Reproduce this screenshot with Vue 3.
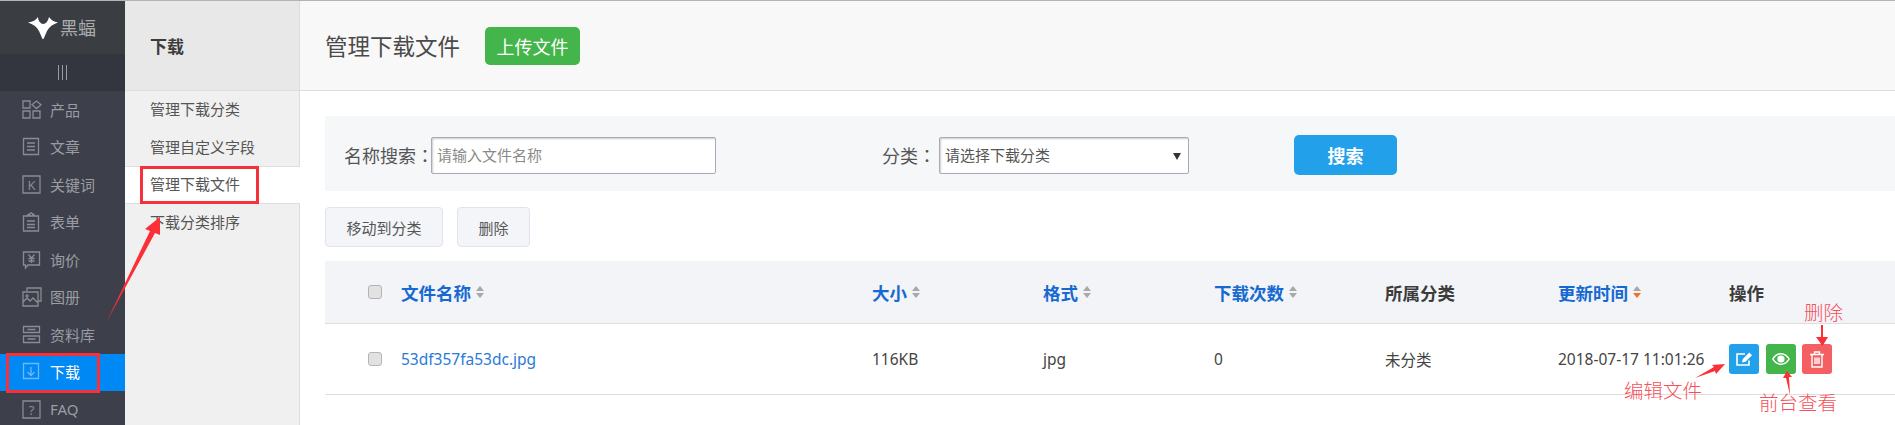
<script setup>
const menu = [
  { name: '产品', paths: ['M1 1h7v7H1zM1 11h7v7H1zM11 11h7v7h-7zM14.500 1l4.500 3.800-4.500 3.800-4.500-3.800z'] },
  { name: '文章', paths: ['M1.500 1.500h15v16h-15zM5 6h8M5 9.500h8M5 13h8'] },
  { name: '关键词', paths: ['M1 1h17v17H1z'], label: 'K' },
  { name: '表单', paths: ['M1.500 4h15v15h-15zM6 4V2.500h1.500a1.500 1.500 0 0 1 3 0H12V4M5 9h8M5 12.500h8M5 15.500h8'] },
  { name: '询价', paths: ['M1.500 2h16v13H6l-2.500 3v-3h-2zM6.500 4.500l3 3.500 3-3.500M9.500 8v5M6.500 8.500h6M6.500 11h6'] },
  { name: '图册', paths: ['M5 4V1h14v13h-3M1 5h15v14H1zM1 15l4-4 3 3 3-3 5 5M5 8a1 1 0 1 0 .1 0'] },
  { name: '资料库', paths: ['M1.500 1.500h16v6h-16zM1.500 11h16v6.500h-16zM5.500 4.500h8M5.500 14h8'] },
  { name: '下载', active: true, paths: ['M1.500 1.500h15v15h-15zM9 5v8M5.500 10L9 13.500 12.500 10'] },
  { name: 'FAQ', paths: ['M1 1h17v17H1z'], label: '?' }
]
const subs = [
  { name: '管理下载分类' },
  { name: '管理自定义字段' },
  { name: '管理下载文件', active: true },
  { name: '下载分类排序' }
]
const columns = [
  { name: '文件名称', sort: 'none', link: true },
  { name: '大小', sort: 'none', link: true },
  { name: '格式', sort: 'none', link: true },
  { name: '下载次数', sort: 'none', link: true },
  { name: '所属分类', sort: '', link: false },
  { name: '更新时间', sort: 'desc', link: true },
  { name: '操作', sort: '', link: false }
]
</script>

<template>
  <div class="page">
    <aside class="side">
      <div class="logo">
        <svg class="bat" width="30" height="22" viewBox="0 0 30 22">
          <path fill="#fff" d="M0 5.500C5 5 8 3 10 0c0 4 3 7 5 7 3 0 5-3 6-7 2 3 5 5 9 5.500-5 1.500-9 4.500-11 8.500l-3.500 8h-1L11 14C9 10 5 7 0 5.500z" />
        </svg>
        <span class="logo-text">黑蝠</span>
      </div>
      <div class="toggle"><i></i><i></i><i></i></div>
      <ul class="menu">
        <li v-for="m in menu" :key="m.name" :class="{ on: m.active }">
          <svg class="mi" width="20" height="20" viewBox="0 0 20 20" fill="none" stroke="currentColor" stroke-width="1.300">
            <path v-for="p in m.paths" :key="p" :d="p" />
            <text v-if="m.label" x="9.500" y="14.500" text-anchor="middle" class="mi-label">{{ m.label }}</text>
          </svg>
          <span class="mt">{{ m.name }}</span>
        </li>
      </ul>
    </aside>

    <nav class="sub">
      <div class="sub-head">下载</div>
      <ul class="sub-list">
        <li v-for="s in subs" :key="s.name" :class="{ on: s.active }">{{ s.name }}</li>
      </ul>
    </nav>

    <main class="main">
      <header class="head">
        <h1>管理下载文件</h1>
        <button class="upload">上传文件</button>
      </header>
      <section class="body">
        <div class="search">
          <label class="l1">名称搜索<span class="colon">：</span></label>
          <input class="name-input" placeholder="请输入文件名称" />
          <label class="l2">分类<span class="colon">：</span></label>
          <div class="cat-wrap">
            <select class="cat"><option>请选择下载分类</option></select>
          </div>
          <button class="go">搜索</button>
        </div>
        <div class="tools">
          <button>移动到分类</button>
          <button>删除</button>
        </div>
        <div class="table">
          <div class="tr th">
            <span class="ck-cell"><i class="ck"></i></span>
            <span v-for="c in columns" :key="c.name" class="hc" :class="{ link: c.link }">
              {{ c.name }}
              <span v-if="c.sort" class="sort" :class="c.sort"><b></b><b></b></span>
            </span>
          </div>
          <div class="tr td">
            <span class="ck-cell"><i class="ck"></i></span>
            <span class="file">53df357fa53dc.jpg</span>
            <span>116KB</span>
            <span>jpg</span>
            <span>0</span>
            <span>未分类</span>
            <span>2018-07-17 11:01:26</span>
            <span class="ops">
              <a class="op blue">
                <svg width="18" height="18" viewBox="0 0 18 18" fill="none" stroke="#fff" stroke-width="1.600">
                  <path d="M14 10.500V15H2V4h8" />
                  <path fill="#fff" stroke="none" d="M7 12.500l.8-3.500 6.500-6.500 2.700 2.700-6.500 6.500z" />
                </svg>
              </a>
              <a class="op green">
                <svg width="18" height="14" viewBox="0 0 18 14">
                  <path fill="#fff" fill-rule="evenodd" d="M0 7c2.200-3.800 5.300-6 9-6s6.800 2.200 9 6c-2.200 3.800-5.300 6-9 6S2.200 10.800 0 7zm1.700 0C3.600 9.900 6 11.600 9 11.600s5.400-1.700 7.300-4.600C14.400 4.100 12 2.400 9 2.400S3.600 4.100 1.700 7zM9 3.400a3.600 3.600 0 1 1 0 7.200 3.600 3.600 0 0 1 0-7.200z" />
                </svg>
              </a>
              <a class="op red">
                <svg width="14" height="17" viewBox="0 0 14 17" fill="none" stroke="#fff" stroke-width="1.400">
                  <path d="M0 3.500h14M4.500 3.500V1h5v2.500M2 3.500V16h10V3.500M5 6.500V13M7 6.500V13M9 6.500V13" />
                </svg>
              </a>
            </span>
          </div>
        </div>
      </section>
    </main>

    <div class="box box-a"></div>
    <div class="box box-b"></div>
    <svg class="arrows" width="1895" height="425" viewBox="0 0 1895 425">
      <path d="M106 323L150 231 145 229 160 217 160 235 155 233z" />
      <path d="M1695 378L1714 367 1712 365 1725 364 1716 374 1715 371z" />
      <path d="M1790 395L1786 378 1783 378 1787 371 1792 377 1789 377z" />
      <path d="M1821 325H1823V337H1828L1822.500 346 1816 337H1821z" />
    </svg>
    <span class="note n1">删除</span>
    <span class="note n2">编辑文件</span>
    <span class="note n3">前台查看</span>
  </div>
</template>

<style scoped>
.page {
  position: relative;
  display: flex;
  width: 1895px;
  height: 425px;
  overflow: hidden;
  box-sizing: border-box;
  border-top: 1px solid #b4b4b4;
  font-family: "Noto Sans", "Noto Sans CJK SC", sans-serif;
  color: #444;
  font-size: 15px;
  background: #fff;
}
ul { list-style: none; margin: 0; padding: 0; }
.side { width: 125px; flex: none; background: #3d3f4a; }
.logo {
  height: 53px;
  background: #3a3e43;
  display: flex;
  align-items: center;
  padding-left: 28px;
  gap: 2px;
  box-sizing: border-box;
}
.logo-text { color: #a9abac; font-size: 18px; line-height: 1; }
.toggle {
  height: 37px;
  background: #33363f;
  display: flex;
  justify-content: center;
  align-items: center;
  gap: 3px;
}
.toggle i { width: 1px; height: 15px; background: #9a9ca1; }
.menu li {
  height: 37.5px;
  display: flex;
  align-items: center;
  padding-left: 22px;
  gap: 8px;
  color: #9b9da3;
}
.mt { margin-top: -1px; }
.menu li.on { background: #0088f4; color: #fff; }
.menu li.on svg { color: #6db9f7; }
.mi { flex: none; color: #8a8c93; }
.mi-label { font-size: 13px; fill: currentColor; stroke: none; font-family: "Noto Sans", sans-serif; }

.sub {
  width: 175px;
  flex: none;
  box-sizing: border-box;
  background: #f0f0f0;
  border-right: 1px solid #ddd;
}
.sub-head {
  height: 90px;
  box-sizing: border-box;
  border-bottom: 1px solid #dedede;
  background: #e9e8e9;
  padding-left: 25px;
  display: flex;
  align-items: center;
  font-size: 17px;
  font-weight: 700;
  color: #3c3c3c;
}
.sub-list li {
  height: 37.5px;
  display: flex;
  align-items: center;
  padding-left: 25px;
  padding-bottom: 2px;
  box-sizing: border-box;
  color: #555;
}
.sub-list li.on {
  background: #fff;
  margin-right: -1px;
  border-top: 1px solid #ddd;
  border-bottom: 1px solid #ddd;
}

.main { flex: 1; min-width: 0; }
.head {
  height: 90px;
  box-sizing: border-box;
  background: #f8f8f8;
  border-bottom: 1px solid #dedede;
  padding-left: 25px;
  display: flex;
  align-items: center;
  gap: 25px;
}
h1 { margin: 0; font-size: 22.500px; font-weight: 400; color: #4a4a4a; }
button { font-family: inherit; cursor: pointer; }
.upload {
  width: 95px;
  height: 38px;
  border: 0;
  border-radius: 5px;
  background: #43b54a;
  color: #fff;
  font-size: 18px;
  padding: 0;
}
.body { padding: 25px 0 0 25px; }
.search {
  height: 75px;
  box-sizing: border-box;
  padding-top: 3px;
  background: #f6f7f9;
  display: flex;
  align-items: center;
  padding-left: 19px;
}
.l1, .l2 { font-size: 18px; color: #555; white-space: nowrap; }
.colon { font-family: "Noto Sans CJK TC", sans-serif; }
.l1 { width: 87px; }
.l2 { width: 57px; margin-left: 166px; }
.name-input, .cat {
  box-sizing: border-box;
  height: 37px;
  border: 1px solid #a9a9b8;
  border-radius: 2px;
  box-shadow: inset 1px 1px 2px #ccc;
  background: #fff;
  font-family: inherit;
  font-size: 15px;
  color: #555;
  outline: 0;
}
.name-input { width: 285px; padding: 0 5px; }
.name-input::placeholder { color: #8a8a8a; }
.cat-wrap { position: relative; display: flex; }
.cat-wrap::after {
  content: '';
  position: absolute;
  left: 234px;
  top: 16px;
  width: 0;
  height: 0;
  border-left: 4px solid transparent;
  border-right: 4px solid transparent;
  border-top: 7px solid #333;
}
.cat { width: 250px; padding: 0 0 0 5px; appearance: none; }
.go {
  margin-left: 105px;
  width: 103px;
  height: 40px;
  border: 0;
  border-radius: 5px;
  background: #22a0ea;
  color: #fff;
  font-size: 18px;
  font-weight: 700;
  padding: 0;
}
.tools { display: flex; gap: 14px; padding-top: 16px; }
.tools button {
  height: 40px;
  box-sizing: border-box;
  border: 1px solid #dfe5ef;
  border-radius: 4px;
  background: #f3f5f9;
  color: #555;
  font-size: 15px;
  padding: 0 20.500px;
}
.table { margin-top: 14px; }
.tr {
  display: grid;
  grid-template-columns: 76px 471px 171px 171px 171px 173px 171px 1fr;
  align-items: center;
  border-bottom: 1px solid #dedede;
  box-sizing: border-box;
  font-size: 15.500px;
}
.th { height: 63px; background: #f2f4f8; }
.td { height: 71px; }
.ck-cell { padding-left: 43px; display: flex; }
.ck {
  width: 14px;
  height: 14px;
  box-sizing: border-box;
  border: 1px solid #b5b5b5;
  border-radius: 3px;
  background: #e2e2e2;
}
.hc { font-size: 17.500px; font-weight: 700; color: #3c3c3c; display: flex; align-items: center; gap: 5px; }
.hc.link { color: #1769d2; }
.sort { display: inline-flex; flex-direction: column; gap: 2px; }
.sort b { width: 0; height: 0; border-left: 4.500px solid transparent; border-right: 4.500px solid transparent; }
.sort b:first-child { border-bottom: 5px solid #a8a8a8; }
.sort b:last-child { border-top: 5px solid #a8a8a8; }
.sort.desc b:last-child { border-top-color: #f2711c; }
.file { color: #2a7ad8; }
.ops { display: flex; gap: 7px; }
.op {
  width: 30px;
  height: 30px;
  border-radius: 3px;
  display: flex;
  align-items: center;
  justify-content: center;
}
.blue { background: #22a0ea; }
.green { background: #43b54a; }
.red { background: #f45f63; margin-left: -1px; }

.box { position: absolute; box-sizing: border-box; border: 3px solid #f6313a; }
.box-a { left: 6px; top: 352px; width: 94px; height: 40px; }
.box-b { left: 140px; top: 165px; width: 119px; height: 38px; }
.arrows { position: absolute; left: 0; top: -1px; pointer-events: none; }
.arrows path { fill: #fb2f35; }
.note { position: absolute; font-size: 19.500px; line-height: 20px; color: #f6505a; white-space: nowrap; font-weight: 300; }
.n1 { left: 1804px; top: 302px; }
.n2 { left: 1624px; top: 380px; }
.n3 { left: 1759px; top: 392px; }
</style>
<style>
html, body { margin: 0; overflow: hidden; background: #fff; }
</style>
